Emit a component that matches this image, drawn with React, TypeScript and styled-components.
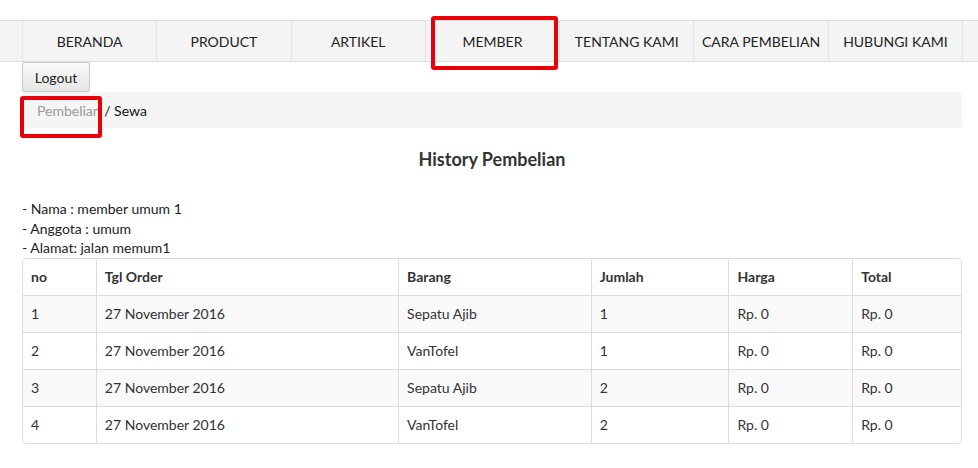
import React from "react";
import styled, { createGlobalStyle } from "styled-components";

const GlobalStyle = createGlobalStyle`
  body {
    margin: 0;
    background: #fff;
    font-family: Lato, "Open Sans", sans-serif;
    font-size: 14px;
    color: #333;
  }
`;

const Page = styled.div`
  position: relative;
  padding-top: 20px;
`;

const NavBar = styled.div`
  background: #f4f4f4;
  border-top: 1px solid #dedede;
  border-bottom: 1px solid #dedede;
`;

const NavInner = styled.div`
  width: 940px;
  margin-left: 22px;
  display: grid;
  grid-template-columns: repeat(7, 1fr);
  border-left: 1px dotted #d6d6d6;
`;

const NavItem = styled.a`
  height: 40px;
  display: flex;
  align-items: center;
  justify-content: center;
  font-size: 14px;
  color: #222;
  text-decoration: none;
  border-right: 1px dotted #d6d6d6;
`;

const Container = styled.div`
  width: 940px;
  margin-left: 22px;
`;

const LogoutButton = styled.button`
  height: 30px;
  width: 68px;
  padding: 0;
  font-family: inherit;
  font-size: 14px;
  color: #222;
  background: linear-gradient(#fafafa, #e6e6e6);
  border: 1px solid #c8c8c8;
  border-radius: 2px;
  display: block;
`;

const Breadcrumb = styled.div`
  background: #f5f5f5;
  border-radius: 4px;
  height: 36px;
  display: flex;
  align-items: center;
  padding-left: 15px;
  color: #111;
`;

const Muted = styled.span`
  color: #999;
`;

const Title = styled.h3`
  margin: 20px 0 0;
  text-align: center;
  font-size: 18px;
  font-weight: 700;
  color: #333;
  line-height: 22px;
`;

const Info = styled.div`
  margin-top: 29px;
  line-height: 19.5px;
  color: #222;
`;

const Table = styled.table`
  width: 940px;
  border-collapse: separate;
  border-spacing: 0;
  border: 1px solid #ddd;
  border-radius: 4px;
`;

const Th = styled.th`
  text-align: left;
  font-weight: 700;
  height: 36px;
  padding: 0 8px;
  border-left: 1px solid #ddd;
  &:first-child {
    border-left: none;
  }
`;

const Row = styled.tr<{ $striped: boolean }>`
  background: ${(p) => (p.$striped ? "#f9f9f9" : "transparent")};
`;

const Td = styled.td`
  height: 36px;
  padding: 0 8px;
  border-top: 1px solid #ddd;
  border-left: 1px solid #ddd;
  &:first-child {
    border-left: none;
  }
`;

const Highlight = styled.div<{ $x: number; $y: number; $w: number; $h: number }>`
  position: absolute;
  left: ${(p) => p.$x}px;
  top: ${(p) => p.$y}px;
  width: ${(p) => p.$w}px;
  height: ${(p) => p.$h}px;
  border: 4px solid #e8000b;
  border-radius: 3px;
  box-sizing: border-box;
`;

const menu = ["BERANDA", "PRODUCT", "ARTIKEL", "MEMBER", "TENTANG KAMI", "CARA PEMBELIAN", "HUBUNGI KAMI"];

const rows = [
  ["1", "27 November 2016", "Sepatu Ajib", "1", "Rp. 0", "Rp. 0"],
  ["2", "27 November 2016", "VanTofel", "1", "Rp. 0", "Rp. 0"],
  ["3", "27 November 2016", "Sepatu Ajib", "2", "Rp. 0", "Rp. 0"],
  ["4", "27 November 2016", "VanTofel", "2", "Rp. 0", "Rp. 0"],
];

const widths = [73, 303, 193, 138, 124, 109];

export default function App() {
  return (
    <Page>
      <GlobalStyle />
      <NavBar>
        <NavInner>
          {menu.map((m) => (
            <NavItem key={m}>{m}</NavItem>
          ))}
        </NavInner>
      </NavBar>
      <Container>
        <LogoutButton>Logout</LogoutButton>
        <Breadcrumb>
          <Muted>Pembelian</Muted>&nbsp;/ Sewa
        </Breadcrumb>
        <Title>History Pembelian</Title>
        <Info>
          - Nama : member umum 1<br />
          - Anggota : umum<br />
          - Alamat: jalan memum1
        </Info>
        <Table>
          <colgroup>
            {widths.map((w, i) => (
              <col key={i} style={{ width: w }} />
            ))}
          </colgroup>
          <thead>
            <tr>
              {["no", "Tgl Order", "Barang", "Jumlah", "Harga", "Total"].map((h) => (
                <Th key={h}>{h}</Th>
              ))}
            </tr>
          </thead>
          <tbody>
            {rows.map((r, i) => (
              <Row key={i} $striped={i % 2 === 0}>
                {r.map((c, j) => (
                  <Td key={j}>{c}</Td>
                ))}
              </Row>
            ))}
          </tbody>
        </Table>
      </Container>
      <Highlight $x={431} $y={16} $w={127} $h={54} />
      <Highlight $x={20} $y={96} $w={82} $h={42} />
    </Page>
  );
}
